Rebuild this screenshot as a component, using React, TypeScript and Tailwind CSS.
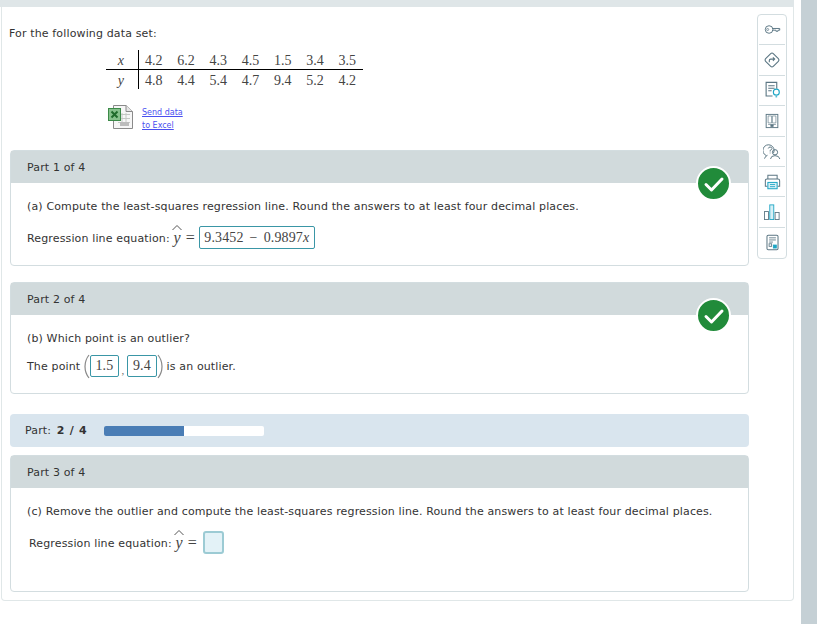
const X_ROW = ["4.2", "6.2", "4.3", "4.5", "1.5", "3.4", "3.5"]
const Y_ROW = ["4.8", "4.4", "5.4", "4.7", "9.4", "5.2", "4.2"]

const SANS = "font-['DejaVu_Sans',Verdana,sans-serif]"
const MATH = "font-['Liberation_Serif',serif]"

function ExcelIcon() {
  return (
    <svg width="27" height="26" viewBox="0 0 27 26" fill="none">
      <path d="M6.5 1.5H19L25.5 7.5V24.5H6.5Z" fill="#f6f6f6" stroke="#8a8a8a" />
      <path d="M19 1.5V7.5H25.5" fill="#e4e4e4" stroke="#8a8a8a" />
      <path d="M11 10.5H23M11 14.5H23M11 18.5H23M15 9V22M19 9V22" stroke="#c4c8c4" />
      <path d="M13 18H22V22H13Z" fill="#bcbcbc" />
      <rect x="1.5" y="4.5" width="12" height="12" fill="#86c18c" stroke="#3c8a48" />
      <path d="M4.5 7.5L10.5 13.5M10.5 7.5L4.5 13.5" stroke="#1f6b2c" strokeWidth="2" />
    </svg>
  )
}

function CheckBadge() {
  return (
    <div className="absolute right-[17px] top-[15px] flex h-[35px] w-[35px] items-center justify-center rounded-full border-2 border-white bg-[#218b3a]">
      <svg width="22" height="18" viewBox="0 0 22 18" fill="none">
        <path d="M3 9.5L8.5 15L19 4" stroke="white" strokeWidth="3" strokeLinecap="round" strokeLinejoin="round" />
      </svg>
    </div>
  )
}

function YHat() {
  return (
    <span className={`relative ${MATH} text-[16px] italic text-[#444]`}>
      y
      <svg className="absolute left-[-1px] top-[-2px]" width="10" height="7" viewBox="0 0 10 7" fill="none">
        <path d="M0.5 6L5 1.5L9.5 6" stroke="#555" strokeWidth="1" />
      </svg>
    </span>
  )
}

function Paren({ flip }: { flip?: boolean }) {
  return (
    <svg className={flip ? "-scale-x-100" : ""} width="6" height="25" viewBox="0 0 6 25" fill="none">
      <path d="M5 1Q1 6 1 12.5T5 24" stroke="#888" strokeWidth="1.2" />
    </svg>
  )
}

function AnswerBox({ children, className }: { children: React.ReactNode; className: string }) {
  return (
    <span className={`flex items-center justify-center rounded-[2px] border border-[#3a96a6] ${MATH} text-[14px] leading-none text-[#444] ${className}`}>
      {children}
    </span>
  )
}

function PartHeader({ label, done }: { label: string; done?: boolean }) {
  return (
    <div className="flex h-[32px] items-center bg-[#d1dadc] pl-[16px] pt-[2px] text-[#333]">
      {label}
      {done && <CheckBadge />}
    </div>
  )
}

const stroke = "#5b7683"
const TOOL_ICONS = [
  <svg key="key" width="17" height="11" viewBox="0 0 24 16" fill="none" stroke={stroke}>
    <circle cx="7" cy="8" r="5.5" strokeWidth="1.4" />
    <circle cx="5" cy="8" r="1.5" />
    <path d="M12.5 6.5H22.5V9H20V10.5H17V9H12.5" strokeWidth="1.4" />
  </svg>,
  <svg key="sign" width="18" height="18" viewBox="0 0 20 20" fill="none" stroke={stroke}>
    <rect x="4" y="4" width="12" height="12" rx="2" transform="rotate(45 10 10)" strokeWidth="1.2" />
    <path d="M7 12.5V10.5Q7 9 8.5 9H12.5M11 7L13 9L11 11" strokeWidth="1.2" />
  </svg>,
  <svg key="hint" width="17" height="18" viewBox="0 0 20 21" fill="none" stroke={stroke}>
    <path d="M10 17.5H2.5V1.5H15V9" strokeWidth="1.3" />
    <path d="M5 5.5H12.5M5 8.5H12.5M5 11.5H9" strokeWidth="1.2" />
    <circle cx="14.5" cy="13" r="3.5" stroke="#1da5c4" strokeWidth="1.3" />
    <path d="M13.5 18.5H15.5" stroke="#1da5c4" strokeWidth="1.3" />
  </svg>,
  <svg key="book" width="14" height="16" viewBox="0 0 18 20" fill="none" stroke={stroke}>
    <rect x="1.5" y="1.5" width="15" height="17" strokeWidth="1.2" />
    <path d="M4 3.5H8.5V12.5H4ZM9.5 3.5H14V12.5H9.5ZM4 14.5H14" strokeWidth="0.8" />
    <rect x="7.5" y="15" width="3" height="2" fill={stroke} />
  </svg>,
  <svg key="ask" width="18" height="17" viewBox="0 0 24 22" fill="none" stroke={stroke}>
    <path d="M4.5 16.5A7.5 7.5 0 1 1 14 13" strokeWidth="1.3" />
    <path d="M2 20.5Q3 17 6 16" strokeWidth="1.3" />
    <path d="M7 7Q7.5 5 9.5 5T12 7Q12 8.5 9.5 9.5V11M9.5 12.5V13.5" strokeWidth="1.3" />
    <circle cx="16" cy="12" r="3.5" strokeWidth="1.3" />
    <path d="M10 21Q10.5 16.5 16 16.5T22.5 21" strokeWidth="1.3" />
  </svg>,
  <svg key="print" width="17" height="16" viewBox="0 0 20 19" fill="none" stroke={stroke}>
    <path d="M4.5 6V1.5H15.5V6" strokeWidth="1.2" />
    <path d="M4 14.5H1.5V8Q1.5 6 3.5 6H16.5Q18.5 6 18.5 8V14.5H16" strokeWidth="1.2" />
    <rect x="4.5" y="10" width="11" height="7.5" fill="#d7f0f6" stroke="#1da5c4" strokeWidth="1.2" />
    <path d="M7 12.5H13M7 15H13" stroke="#1da5c4" />
  </svg>,
  <svg key="chart" width="16" height="16" viewBox="0 0 18 18" fill="none" stroke={stroke}>
    <rect x="0.5" y="8.5" width="4.5" height="9" />
    <rect x="6.5" y="1" width="4.5" height="16.5" fill="#d7f0f6" stroke="#1da5c4" />
    <rect x="12.5" y="9.5" width="4.5" height="8" />
  </svg>,
  <svg key="report" width="13" height="17" viewBox="0 0 15 20" fill="none" stroke={stroke}>
    <path d="M2.5 1.5H12.5Q14 1.5 14 3V17Q14 18.5 12.5 18.5H2.5Q1 18.5 1 17V3Q1 1.5 2.5 1.5Z" strokeWidth="1.2" />
    <path d="M3.5 4.5H11.5M3.5 7H11.5M3.5 9.5H8" />
    <rect x="3.5" y="11.5" width="3" height="3" />
    <rect x="8.5" y="13" width="3.5" height="3.5" fill="#1da5c4" stroke="#1da5c4" />
  </svg>,
]

function Toolbar() {
  return (
    <div className="flex h-[245px] w-[30px] shrink-0 flex-col items-center rounded-[4px] border border-[#d3dde0] bg-white px-[1px]">
      {TOOL_ICONS.map((icon, i) => (
        <div
          key={i}
          className={`flex h-[30.4px] w-full items-center justify-center ${i < TOOL_ICONS.length - 1 ? "border-b border-[#d3dde0]" : ""}`}
        >
          {icon}
        </div>
      ))}
    </div>
  )
}

export default function App() {
  return (
    <div className={`flex h-[624px] w-[817px] overflow-hidden bg-white ${SANS} text-[11px] tracking-[0.14px] text-[#333]`}>
      <div className="flex w-[794px] shrink-0 flex-col">
        <div className="h-[7px] bg-[#dfe6e8]" />
        <div className="ml-[1px] flex h-[594px] gap-[8px] rounded-b-[4px] border-x border-b border-[#e0e7e8] pl-[8px] pr-[5px] pt-[7px]">
          <div className="flex w-[739px] shrink-0 flex-col">
            <p className="ml-[-1px] pt-[13px] leading-[14px]">For the following data set:</p>
            <div className={`ml-[96px] mt-[9px] w-[257px] ${MATH} text-[14px] leading-[21px] tracking-normal text-[#444]`}>
              <div className="flex h-[19px]">
                <span className="w-[33px] border-r border-black pr-[14px] text-right italic">x</span>
                <div className="flex w-[217px] justify-between pl-[6px]">
                  {X_ROW.map((v, i) => (
                    <span key={i}>{v}</span>
                  ))}
                </div>
              </div>
              <div className="h-[1px] bg-black" />
              <div className="flex h-[19px]">
                <span className="w-[33px] border-r border-black pr-[14px] text-right italic">y</span>
                <div className="flex w-[217px] justify-between pl-[6px]">
                  {Y_ROW.map((v, i) => (
                    <span key={i}>{v}</span>
                  ))}
                </div>
              </div>
            </div>
            <div className="ml-[97px] mt-[15px] flex h-[26px] gap-[8px]">
              <ExcelIcon />
              <div className="flex flex-col pt-[2px] text-[8px] leading-[13px] tracking-normal text-[#4a50f0] underline">
                <span>Send data</span>
                <span>to Excel</span>
              </div>
            </div>
            <div className="relative mt-[20px] h-[116px] rounded-[4px] border border-[#d3dde0]">
              <PartHeader label="Part 1 of 4" done />
              <p className="mt-[17px] pl-[16px] leading-[14px]">(a) Compute the least-squares regression line. Round the answers to at least four decimal places.</p>
              <div className="mt-[12px] flex h-[23px] items-center pl-[16px]">
                <span className="pt-[3px]">Regression line equation:&nbsp;</span>
                <YHat />
                <span className={`${MATH} ml-[5px] text-[16px] text-[#444]`}>=</span>
                <AnswerBox className="ml-[4px] h-[23px] w-[116px]">
                  9.3452<span className="mx-[6px]">−</span>0.9897<i>x</i>
                </AnswerBox>
              </div>
            </div>
            <div className="relative mt-[16px] h-[112px] rounded-[4px] border border-[#d3dde0]">
              <PartHeader label="Part 2 of 4" done />
              <p className="mt-[17px] pl-[16px] leading-[14px]">(b) Which point is an outlier?</p>
              <div className="mt-[9px] flex h-[22px] items-center pl-[16px]">
                <span className="pt-[3px]">The point&nbsp;</span>
                <Paren />
                <AnswerBox className="h-[22px] w-[29px]">1.5</AnswerBox>
                <span className={`${MATH} flex w-[8px] justify-center self-end text-[11px] leading-[14px] text-[#666]`}>,</span>
                <AnswerBox className="h-[22px] w-[30px]">9.4</AnswerBox>
                <Paren flip />
                <span className="pt-[3px]">&nbsp;is an outlier.</span>
              </div>
            </div>
            <div className="mt-[20px] flex h-[33px] items-center rounded-[4px] bg-[#d9e5ee] pl-[15px]">
              <span className="w-[79px] pt-[2px]">
                Part: <b className="ml-[2px] tracking-[0.7px]">2 / 4</b>
              </span>
              <div className="h-[10px] w-[160px] overflow-hidden rounded-[2px] bg-white">
                <div className="h-full w-1/2 bg-[#4a7db5]" />
              </div>
            </div>
            <div className="mt-[8px] h-[137px] rounded-[4px] border border-[#d3dde0]">
              <PartHeader label="Part 3 of 4" />
              <p className="mt-[17px] pl-[16px] leading-[14px]">(c) Remove the outlier and compute the least-squares regression line. Round the answers to at least four decimal places.</p>
              <div className="mt-[12px] flex h-[23px] items-center pl-[18px]">
                <span className="pt-[3px]">Regression line equation:&nbsp;</span>
                <YHat />
                <span className={`${MATH} ml-[5px] text-[16px] text-[#444]`}>=</span>
                <span className="ml-[6px] h-[23px] w-[21px] rounded-[3px] border-2 border-[#9ccbd4] bg-[#e3f2f7]" />
              </div>
            </div>
          </div>
          <Toolbar />
        </div>
      </div>
      <div className="ml-[7px] h-full w-[16px] bg-[#c5d0d5]" />
    </div>
  )
}
